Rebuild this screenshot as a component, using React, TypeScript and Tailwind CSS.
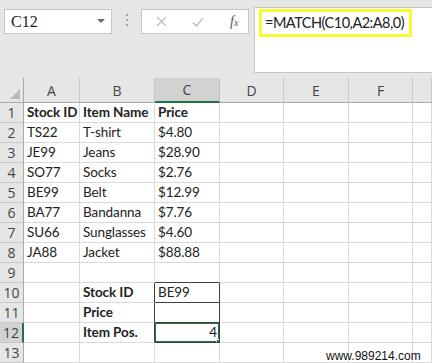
import React from "react";

type Row = { a: string; b: string; c: string; bold?: boolean; boldB?: boolean; right?: boolean };

const rows: Row[] = [
  { a: "Stock ID", b: "Item Name", c: "Price", bold: true },
  { a: "TS22", b: "T-shirt", c: "$4.80" },
  { a: "JE99", b: "Jeans", c: "$28.90" },
  { a: "SO77", b: "Socks", c: "$2.76" },
  { a: "BE99", b: "Belt", c: "$12.99" },
  { a: "BA77", b: "Bandanna", c: "$7.76" },
  { a: "SU66", b: "Sunglasses", c: "$4.60" },
  { a: "JA88", b: "Jacket", c: "$88.88" },
  { a: "", b: "", c: "" },
  { a: "", b: "Stock ID", c: "BE99", boldB: true },
  { a: "", b: "Price", c: "", boldB: true },
  { a: "", b: "Item Pos.", c: "4", boldB: true, right: true },
  { a: "", b: "", c: "" },
];

const cols = ["A", "B", "C", "D", "E", "F", ""];

function Cell({ children, className = "" }: { children?: React.ReactNode; className?: string }) {
  return (
    <div className={`h-[20px] border-r border-b border-[#dadada] bg-white pl-[3px] pr-[2px] text-[13.5px] leading-[19px] tracking-[-0.1px] text-[#222] whitespace-nowrap overflow-hidden ${className}`}>
      {children}
    </div>
  );
}

export default function App() {
  return (
    <div className="relative w-[432px] h-[363px] overflow-hidden bg-[#e6e6e6] font-['Lato',sans-serif]">
      {/* formula bar */}
      <div className="flex h-[78px] items-start">
        <div className="ml-[4px] mt-[9px] flex h-[25px] w-[108px] items-center justify-between border border-[#c6c6c6] bg-white pl-[6px] pr-[6px]">
          <span className="font-['Liberation_Serif',serif] text-[16px] text-[#222]">C12</span>
          <svg width="8" height="5" viewBox="0 0 8 5">
            <path d="M0 0 L8 0 L4 4 Z" fill="#6a6a6a" />
          </svg>
        </div>
        <div className="ml-[14px] mt-[14px] flex flex-col gap-[3px]">
          <span className="h-[2px] w-[2px] bg-[#a8a8a8]" />
          <span className="h-[2px] w-[2px] bg-[#a8a8a8]" />
          <span className="h-[2px] w-[2px] bg-[#a8a8a8]" />
        </div>
        <div className="ml-[13px] mt-[9px] flex h-[25px] w-[108px] items-center border border-[#c6c6c6] bg-white">
          <svg className="ml-[14px]" width="11" height="11" viewBox="0 0 11 11">
            <path d="M1 1 L10 10 M10 1 L1 10" stroke="#bdbdbd" strokeWidth="1.3" />
          </svg>
          <svg className="ml-[25px]" width="12" height="10" viewBox="0 0 12 10">
            <path d="M1 5.5 L4.5 9 L11 1" stroke="#bdbdbd" strokeWidth="1.4" fill="none" />
          </svg>
          <span className="ml-[26px] font-['Liberation_Serif',serif] text-[14px] italic text-[#555]">
            f<span className="text-[10px]">x</span>
          </span>
        </div>
        <div className="ml-[5px] mt-[7px] h-[66px] flex-1 border-y border-l border-[#c6c6c6] bg-white pl-[4px] pt-[1px]">
          <div className="inline-block h-[28px] border-[3px] border-[#fafa32] pl-[3px] pr-[5px] text-[14.5px] leading-[21px] tracking-[-0.5px] text-[#222]">
            =MATCH(C10,A2:A8,0)
          </div>
        </div>
      </div>

      {/* sheet */}
      <div className="grid grid-cols-[24px_56px_75px_65px_64px_65px_64px_19px]">
        <div className="flex h-[25px] items-end justify-end border-r border-b border-[#a9a9a9] bg-[#e6e6e6] pr-[3px] pb-[3px]">
          <svg width="10" height="10" viewBox="0 0 10 10">
            <path d="M10 0 L10 10 L0 10 Z" fill="#b9b9b9" />
          </svg>
        </div>
        {cols.map((c, i) => (
          <div
            key={i}
            className={`flex h-[25px] items-center justify-center border-r text-[14px] text-[#444] font-['Open_Sans',sans-serif] ${
              c === "C"
                ? "border-b-2 border-r-[#c0c0c0] border-b-[#217346] bg-[#d2d2d2]"
                : "border-b border-r-[#c8c8c8] border-b-[#a9a9a9] bg-[#e6e6e6]"
            }`}
          >
            {c}
          </div>
        ))}
        {rows.map((r, i) => {
          const n = i + 1;
          const sel = n === 12;
          const boxed = n >= 10 && n <= 12;
          return (
            <React.Fragment key={n}>
              <div
                className={`flex h-[20px] items-center justify-center border-b font-['Open_Sans',sans-serif] text-[14px] text-[#444] ${
                  sel
                    ? "border-r-2 border-r-[#217346] border-b-[#c8c8c8] bg-[#d2d2d2]"
                    : "border-r border-r-[#a9a9a9] border-b-[#c8c8c8] bg-[#e6e6e6]"
                }`}
              >
                {n}
              </div>
              <Cell className={r.bold ? "font-bold" : ""}>{r.a}</Cell>
              <Cell className={`${r.bold || r.boldB ? "font-bold" : ""} ${boxed ? "border-r-[#404040]" : ""}`}>{r.b}</Cell>
              <Cell
                className={`relative ${r.bold ? "font-bold" : ""} ${r.right ? "text-right" : ""} ${
                  boxed || n === 9 ? "border-b-[#404040]" : ""
                } ${boxed ? "border-r-[#404040]" : ""}`}
              >
                {r.c}
                {sel && (
                  <div className="absolute -left-[1px] -top-[1px] -right-[1px] -bottom-[1px] border-2 border-[#217346]">
                    <div className="absolute -right-[4px] -bottom-[4px] h-[6px] w-[6px] border border-white bg-[#217346]" />
                  </div>
                )}
              </Cell>
              <Cell />
              <Cell />
              <Cell />
              <Cell />
            </React.Fragment>
          );
        })}
      </div>

      <div className="absolute left-[326px] top-[347px] font-['Liberation_Sans',sans-serif] text-[12px] text-[#111]">
        www.989214.com
      </div>
    </div>
  );
}
